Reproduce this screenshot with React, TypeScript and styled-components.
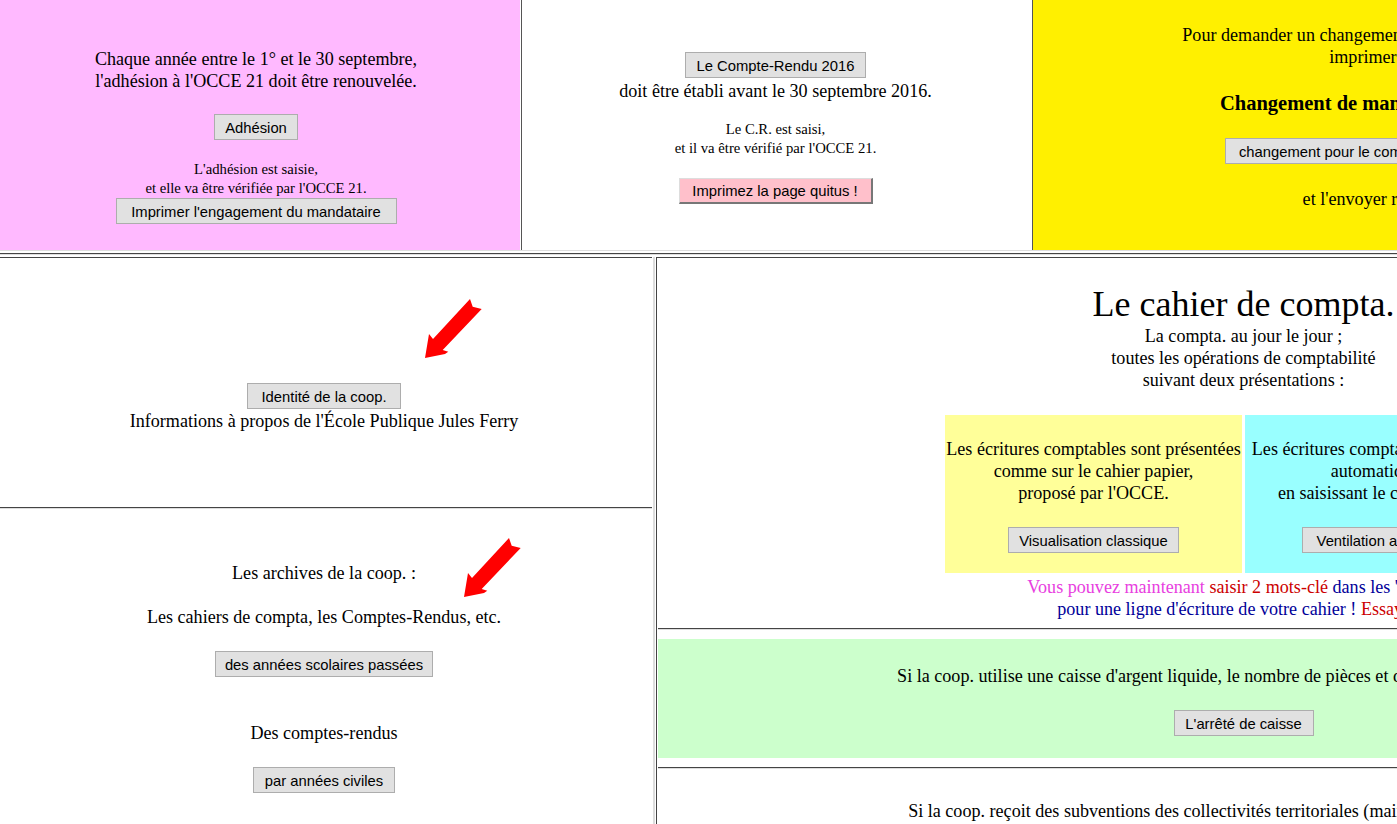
import React from 'react';
import styled, { createGlobalStyle } from 'styled-components';

const Global = createGlobalStyle`
  html, body {
    margin: 0;
    padding: 0;
    background: #fff;
    overflow: hidden;
  }
  body {
    font-family: "Liberation Serif", "Times New Roman", serif;
    font-size: 18.1px;
    color: #000;
  }
`;

const Page = styled.div`
  width: 1397px;
  height: 824px;
  overflow: hidden;
`;

const Sheet = styled.div`
  width: 1830px;
`;

const TopRow = styled.div`
  display: flex;
  height: 250px;
  border-bottom: 1px solid #ddd;
`;

const TopCell = styled.div<{ $bg: string; $width: number; $pad: number; $inset?: number; $sep?: boolean }>`
  width: ${(p) => p.$width}px;
  flex: none;
  box-sizing: border-box;
  padding: ${(p) => p.$pad}px ${(p) => p.$inset ?? 0}px 0 0;
  background: ${(p) => p.$bg};
  text-align: center;
  border-left: ${(p) => (p.$sep ? '1px solid #555' : 'none')};
  margin-left: ${(p) => (p.$sep ? '1px' : '0')};
`;

const Line = styled.hr`
  margin: 0;
  border: none;
  border-top: 1px solid #444;
  border-bottom: 1px solid #ddd;
`;

const TopRule = styled(Line)`
  margin: 2px 0;
`;

const Para = styled.div<{ $top?: number; $color?: string }>`
  line-height: 22px;
  white-space: nowrap;
  margin-top: ${(p) => p.$top ?? 0}px;
  color: ${(p) => p.$color ?? 'inherit'};
`;

const Small = styled.div<{ $top?: number }>`
  font-size: 14.7px;
  line-height: 19px;
  white-space: nowrap;
  margin-top: ${(p) => p.$top ?? 0}px;
`;

const Strong = styled(Para)`
  font-size: 20.5px;
  font-weight: bold;
`;

const Title = styled.div`
  font-size: 36px;
  line-height: 42px;
  white-space: nowrap;
`;

const Btn = styled.button<{ $top?: number; $pink?: boolean; $w: number }>`
  display: block;
  width: ${(p) => p.$w}px;
  margin: ${(p) => p.$top ?? 0}px auto 0;
  height: 26px;
  padding: 1px 0 0;
  box-sizing: border-box;
  font-family: "Liberation Sans", Arial, sans-serif;
  font-size: 14.8px;
  color: #000;
  white-space: nowrap;
  background: ${(p) => (p.$pink ? '#ffc0cb' : '#e1e1e1')};
  border-style: solid;
  border-width: ${(p) => (p.$pink ? '1px 2px 2px 1px' : '1px')};
  border-color: ${(p) => (p.$pink ? '#ddd #777 #777 #ddd' : '#adadad')};
`;

const Lower = styled.div`
  display: flex;
`;

const LeftPane = styled.div`
  width: 652px;
  flex: none;
  border-top: 1px solid #444;
  box-sizing: border-box;
  text-align: center;
`;

const LeftBlock = styled.div<{ $height: number; $pad: number }>`
  position: relative;
  box-sizing: border-box;
  height: ${(p) => p.$height}px;
  padding: ${(p) => p.$pad}px 4px 0 0;
`;

const Arrow = styled.svg<{ $left: number; $top: number }>`
  position: absolute;
  left: ${(p) => p.$left}px;
  top: ${(p) => p.$top}px;
  width: 58px;
  height: 60px;
`;

const Gutter = styled.div`
  width: 2px;
  margin: 0 1px;
  flex: none;
  background: #ddd;
`;

const RightPane = styled.div`
  width: 1173px;
  flex: none;
  padding-left: 1px;
  border-top: 1px solid #444;
  border-left: 1px solid #444;
  box-sizing: border-box;
  text-align: center;
`;

const Intro = styled.div`
  padding-top: 25px;
`;

const Choices = styled.div`
  display: flex;
  justify-content: center;
  gap: 3px;
  margin-top: 24px;
`;

const Choice = styled.div<{ $bg: string }>`
  width: 297px;
  height: 158px;
  padding-top: 23px;
  box-sizing: border-box;
  background: ${(p) => p.$bg};
`;

const Notice = styled.div`
  padding: 3px 0 8px;
`;

const Tint = styled.span<{ $color: string }>`
  color: ${(p) => p.$color};
`;

const Green = styled.div`
  margin: 9px 0;
  height: 119px;
  padding-top: 26px;
  box-sizing: border-box;
  background: #ccffcc;
`;

const Subsidy = styled.div`
  padding-top: 31px;
`;

const RedArrow = ({ left, top }: { left: number; top: number }) => (
  <Arrow $left={left} $top={top} viewBox="0 0 58 60">
    <polygon points="46,0 48.7,7.7 57.7,10 18.7,51 24.3,52.7 21,55 1,59 5,35 9,40" fill="#f00" />
  </Arrow>
);

const App: React.FC = () => {
  return (
    <Page>
      <Global />
      <Sheet>
        <TopRow>
          <TopCell $bg="#ffb9ff" $width={520} $pad={48} $inset={8}>
            <Para>Chaque année entre le 1° et le 30 septembre,</Para>
            <Para>l'adhésion à l'OCCE 21 doit être renouvelée.</Para>
            <Btn $w={84} $top={22}>Adhésion</Btn>
            <Small $top={20}>L'adhésion est saisie,</Small>
            <Small>et elle va être vérifiée par l'OCCE 21.</Small>
            <Btn $w={281}>Imprimer l'engagement du mandataire</Btn>
          </TopCell>
          <TopCell $bg="#fff" $width={510} $pad={52} $inset={2} $sep>
            <Btn $w={181}>Le Compte-Rendu 2016</Btn>
            <Para $top={2}>doit être établi avant le 30 septembre 2016.</Para>
            <Small $top={18}>Le C.R. est saisi,</Small>
            <Small>et il va être vérifié par l'OCCE 21.</Small>
            <Btn $w={194} $pink $top={20}>Imprimez la page quitus !</Btn>
          </TopCell>
          <TopCell $bg="#fff000" $width={797} $pad={24} $sep>
            <Para>Pour demander un changement de mandataire à la coopérative il doit</Para>
            <Para>imprimer le formulaire joint</Para>
            <Strong $top={24}>Changement de mandataire de la coopérative 21</Strong>
            <Btn $w={412} $top={24}>changement pour le compte de la coopérative scolaire 21 :</Btn>
            <Para $top={24}>et l'envoyer rempli, signé à l'OCCE</Para>
          </TopCell>
        </TopRow>
        <TopRule />
        <Lower>
          <LeftPane>
            <LeftBlock $height={249} $pad={125}>
              <RedArrow left={424} top={41} />
              <Btn $w={154}>Identité de la coop.</Btn>
              <Para $top={1}>Informations à propos de l'École Publique Jules Ferry</Para>
            </LeftBlock>
            <Line />
            <LeftBlock $height={320} $pad={53}>
              <RedArrow left={463} top={29} />
              <Para>Les archives de la coop. :</Para>
              <Para $top={22}>Les cahiers de compta, les Comptes-Rendus, etc.</Para>
              <Btn $w={218} $top={23}>des années scolaires passées</Btn>
              <Para $top={45}>Des comptes-rendus</Para>
              <Btn $w={142} $top={23}>par années civiles</Btn>
            </LeftBlock>
          </LeftPane>
          <Gutter />
          <RightPane>
            <Intro>
              <Title>Le cahier de compta.</Title>
              <Para>La compta. au jour le jour ;</Para>
              <Para>toutes les opérations de comptabilité</Para>
              <Para>suivant deux présentations :</Para>
            </Intro>
            <Choices>
              <Choice $bg="#ffff99">
                <Para>Les écritures comptables sont présentées</Para>
                <Para>comme sur le cahier papier,</Para>
                <Para>proposé par l'OCCE.</Para>
                <Btn $w={171} $top={23}>Visualisation classique</Btn>
              </Choice>
              <Choice $bg="#99ffff">
                <Para>Les écritures comptables sont ventilées</Para>
                <Para>automatiquement</Para>
                <Para>en saisissant le code du compte.</Para>
                <Btn $w={184} $top={23}>Ventilation automatique</Btn>
              </Choice>
            </Choices>
            <Notice>
              <Para>
                <Tint $color="#e83ee0">Vous pouvez maintenant </Tint>
                <Tint $color="#cc0000">saisir 2 mots-clé </Tint>
                <Tint $color="#000099">dans les 'Libellés'</Tint>
              </Para>
              <Para>
                <Tint $color="#000099">pour une ligne d'écriture de votre cahier ! </Tint>
                <Tint $color="#cc0000">Essayez !</Tint>
              </Para>
            </Notice>
            <Line />
            <Green>
              <Para>Si la coop. utilise une caisse d'argent liquide, le nombre de pièces et de billets peut être saisi ici.</Para>
              <Btn $w={140} $top={23}>L'arrêté de caisse</Btn>
            </Green>
            <Line />
            <Subsidy>
              <Para>Si la coop. reçoit des subventions des collectivités territoriales (mairie, conseil général etc...)</Para>
            </Subsidy>
          </RightPane>
        </Lower>
      </Sheet>
    </Page>
  );
};

export default App;
